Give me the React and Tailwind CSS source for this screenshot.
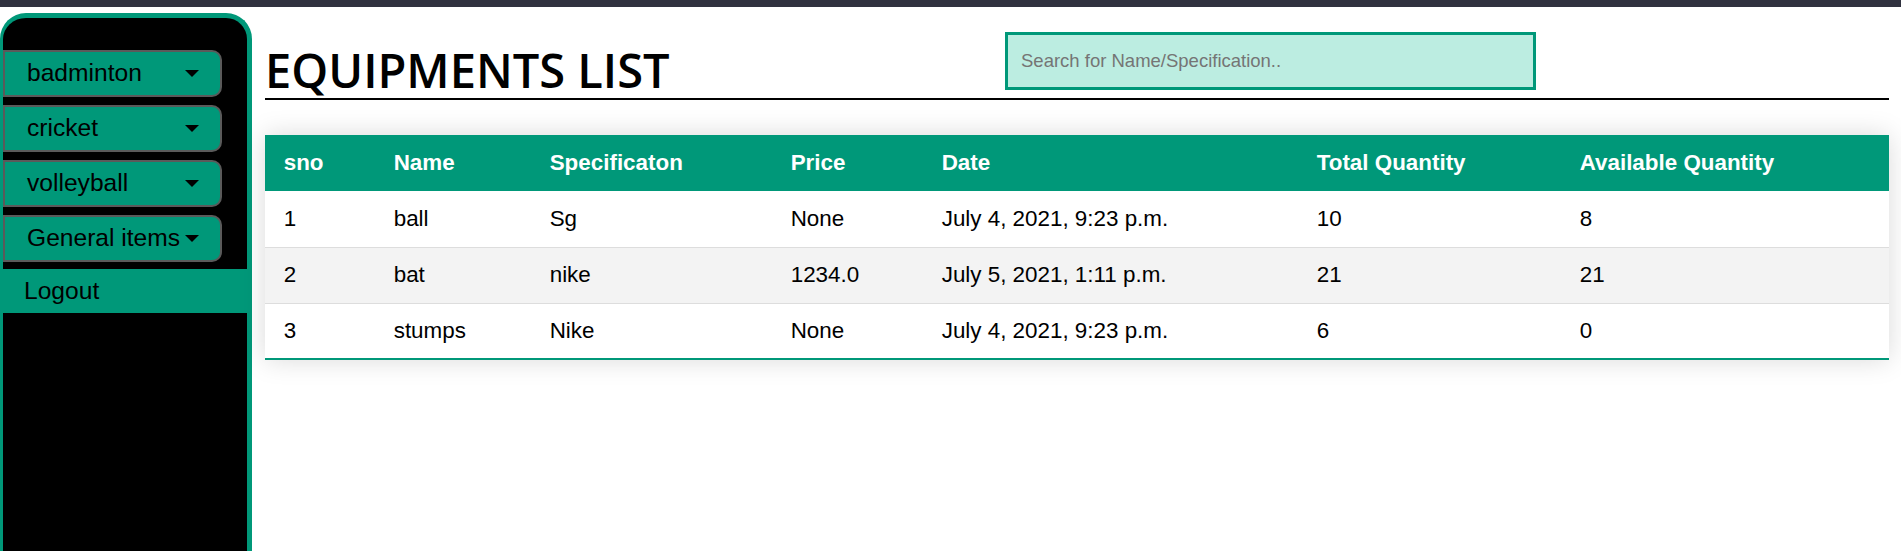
import { useState } from 'react'

const equipments = [
  { sno: 1, name: 'ball', spec: 'Sg', price: 'None', date: 'July 4, 2021, 9:23 p.m.', total: 10, available: 8 },
  { sno: 2, name: 'bat', spec: 'nike', price: '1234.0', date: 'July 5, 2021, 1:11 p.m.', total: 21, available: 21 },
  { sno: 3, name: 'stumps', spec: 'Nike', price: 'None', date: 'July 4, 2021, 9:23 p.m.', total: 6, available: 0 },
]

const sports = ['badminton', 'cricket', 'volleyball', 'General items']

function Caret() {
  return (
    <span className="inline-block w-0 h-0 border-l-[7px] border-r-[7px] border-t-[7px] border-l-transparent border-r-transparent border-t-black" />
  )
}

function Sidebar() {
  return (
    <aside className="mt-[6px] w-[252px] h-[538px] shrink-0 bg-black border-[5px] border-l-[3px] border-b-0 border-[#009879] rounded-t-[26px] pt-[32px]">
      <div className="flex flex-col gap-[8px]">
        {sports.map(s => (
          <button
            key={s}
            className="w-[219px] h-[47px] flex items-center justify-between pl-[22px] pr-[21px] bg-[#009879] border-2 border-[#5a5a5a] rounded-r-[10px] text-[24.6px] text-black text-left"
          >
            <span>{s}</span>
            <Caret />
          </button>
        ))}
      </div>
      <div className="mt-[7px] h-[44px] flex items-center pl-[21px] bg-[#009879] text-[24.6px] text-black">
        Logout
      </div>
    </aside>
  )
}

export default function App() {
  const [query, setQuery] = useState('')

  const rows = equipments.filter(e =>
    (e.name + ' ' + e.spec).toLowerCase().includes(query.toLowerCase())
  )

  return (
    <div className="h-[551px] overflow-hidden bg-white font-['Liberation_Sans',Arial,sans-serif]">
      <div className="h-[7px] bg-[#30323f]" />
      <div className="flex items-start">
        <Sidebar />

        <main className="flex-1 ml-[13px] mr-[12px]">
          <div className="flex items-start h-[93px] border-b-2 border-black">
            <h1 className="w-[740px] mt-[40px] leading-none text-[47px] font-semibold text-black font-['Open_Sans',sans-serif]">
              EQUIPMENTS LIST
            </h1>
            <input
              type="text"
              value={query}
              onChange={e => setQuery(e.target.value)}
              placeholder="Search for Name/Specification.."
              className="mt-[25px] w-[531px] h-[58px] pl-[13px] bg-[#bcede1] border-[3px] border-[#009879] text-[18.5px] text-black placeholder:text-[#757575] outline-none"
            />
          </div>

          <table className="mt-[35px] w-full table-fixed border-collapse text-[22.4px] text-black shadow-[0_0_25px_rgba(0,0,0,0.15)]">
            <colgroup>
              <col className="w-[110px]" />
              <col className="w-[156px]" />
              <col className="w-[241px]" />
              <col className="w-[151px]" />
              <col className="w-[375px]" />
              <col className="w-[263px]" />
              <col className="w-[328px]" />
            </colgroup>
            <thead>
              <tr className="bg-[#009879] text-white text-left">
                <th className="h-[56px] px-[18.7px] font-bold">sno</th>
                <th className="h-[56px] px-[18.7px] font-bold">Name</th>
                <th className="h-[56px] px-[18.7px] font-bold">Specificaton</th>
                <th className="h-[56px] px-[18.7px] font-bold">Price</th>
                <th className="h-[56px] px-[18.7px] font-bold">Date</th>
                <th className="h-[56px] px-[18.7px] font-bold">Total Quantity</th>
                <th className="h-[56px] px-[18.7px] font-bold">Available Quantity</th>
              </tr>
            </thead>
            <tbody>
              {rows.map((r, i) => (
                <tr
                  key={r.sno}
                  className={`border-b ${i === rows.length - 1 ? 'border-b-2 border-[#009879]' : 'border-[#dddddd]'} ${i % 2 === 1 ? 'bg-[#f3f3f3]' : 'bg-white'}`}
                >
                  <td className="h-[56px] px-[18.7px]">{r.sno}</td>
                  <td className="h-[56px] px-[18.7px]">{r.name}</td>
                  <td className="h-[56px] px-[18.7px]">{r.spec}</td>
                  <td className="h-[56px] px-[18.7px]">{r.price}</td>
                  <td className="h-[56px] px-[18.7px]">{r.date}</td>
                  <td className="h-[56px] px-[18.7px]">{r.total}</td>
                  <td className="h-[56px] px-[18.7px]">{r.available}</td>
                </tr>
              ))}
            </tbody>
          </table>
        </main>
      </div>
    </div>
  )
}
